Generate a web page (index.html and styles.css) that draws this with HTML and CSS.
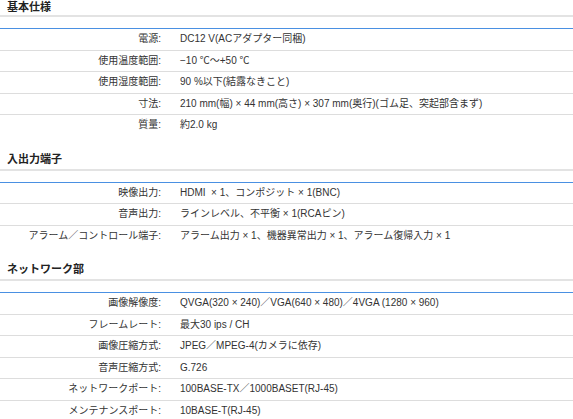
FILE: index.html
```html
<!DOCTYPE html>
<html lang="ja">
<head>
<meta charset="utf-8">
<title>仕様</title>
<link rel="stylesheet" href="styles.css">
</head>
<body>
<div class="page">
  <section class="spec">
    <h2 class="spec-title">基本仕様</h2>
    <table class="spec-table">
      <tr><th>電源:</th><td>DC12 V(ACアダプター同梱)</td></tr>
      <tr><th>使用温度範囲:</th><td>−10 ℃〜+50 ℃</td></tr>
      <tr><th>使用湿度範囲:</th><td>90 %以下(結露なきこと)</td></tr>
      <tr><th>寸法:</th><td>210 mm(幅) × 44 mm(高さ) × 307 mm(奥行)(ゴム足、突起部含まず)</td></tr>
      <tr><th>質量:</th><td>約2.0 kg</td></tr>
    </table>
  </section>
  <section class="spec">
    <h2 class="spec-title">入出力端子</h2>
    <table class="spec-table">
      <tr><th>映像出力:</th><td>HDMI &nbsp;× 1、コンポジット × 1(BNC)</td></tr>
      <tr><th>音声出力:</th><td>ラインレベル、不平衡 × 1(RCAピン)</td></tr>
      <tr><th>アラーム／コントロール端子:</th><td>アラーム出力 × 1、機器異常出力 × 1、アラーム復帰入力 × 1</td></tr>
    </table>
  </section>
  <section class="spec">
    <h2 class="spec-title">ネットワーク部</h2>
    <table class="spec-table">
      <tr><th>画像解像度:</th><td>QVGA(320 × 240)／VGA(640 × 480)／4VGA (1280 × 960)</td></tr>
      <tr><th>フレームレート:</th><td>最大30 ips / CH</td></tr>
      <tr><th>画像圧縮方式:</th><td>JPEG／MPEG-4(カメラに依存)</td></tr>
      <tr><th>音声圧縮方式:</th><td>G.726</td></tr>
      <tr><th>ネットワークポート:</th><td>100BASE-TX／1000BASET(RJ-45)</td></tr>
      <tr><th>メンテナンスポート:</th><td>10BASE-T(RJ-45)</td></tr>
    </table>
  </section>
</div>
</body>
</html>
```

FILE: styles.css
```css
html, body {
  margin: 0;
  padding: 0;
  background: #ffffff;
}
body {
  font-family: "Liberation Sans", "Noto Sans CJK JP", sans-serif;
  color: #333333;
  overflow: hidden;
}
.page {
  width: 573px;
}
.spec-title {
  margin: 12px 0 11px;
  padding: 0 0 1px 7px;
  font-family: "Noto Sans CJK JP", sans-serif;
  font-size: 11px;
  line-height: 20px;
  font-weight: bold;
  color: #222222;
  border-bottom: 2px solid #e3e3e3;
}
.spec:first-child .spec-title {
  margin-top: -3px;
  line-height: 18px;
  padding-bottom: 0;
}
.spec-table {
  width: 100%;
  border-collapse: collapse;
  border-top: 1px solid #4a90e2;
  font-size: 10px;
}
.spec-table th,
.spec-table td {
  padding: 4px 0;
  line-height: 12.5px;
  border-bottom: 1px solid #dddddd;
  font-weight: normal;
  vertical-align: middle;
}
.spec-table tr:last-child th,
.spec-table tr:last-child td {
  border-bottom: none;
}
.spec-table th {
  width: 161px;
  text-align: right;
  white-space: nowrap;
}
.spec-table td {
  padding-left: 19px;
  text-align: left;
}
```
